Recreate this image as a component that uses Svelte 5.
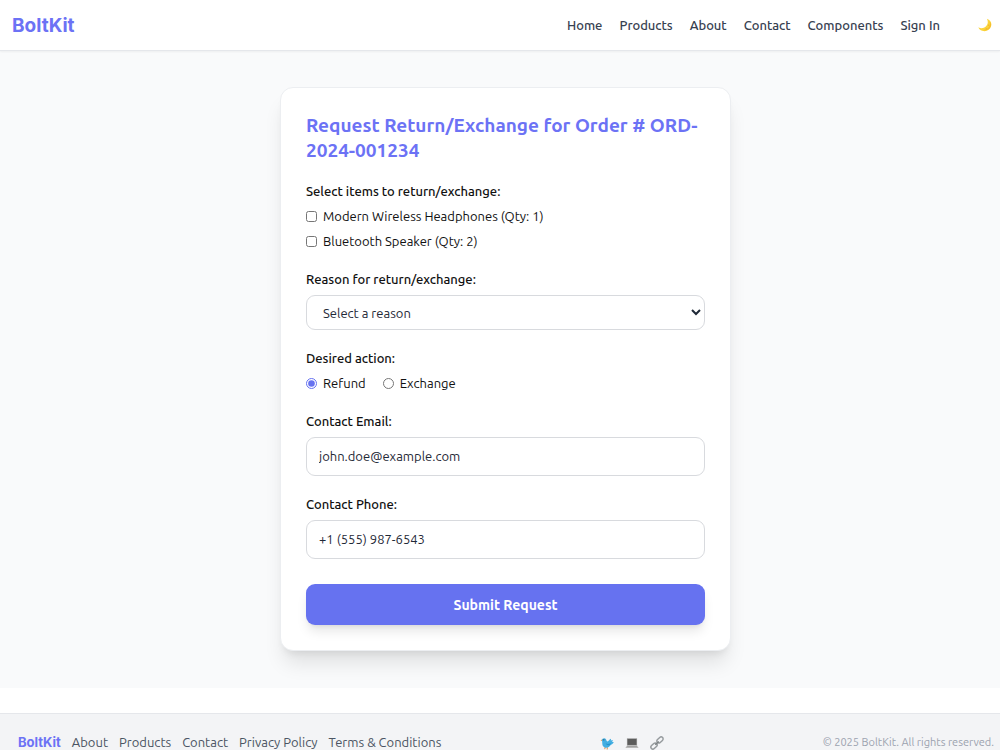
<script>
  const navLinks = ['Home', 'Products', 'About', 'Contact', 'Components', 'Sign In'];
  const footerLinks = ['About', 'Products', 'Contact', 'Privacy Policy', 'Terms & Conditions'];

  const order = {
    id: 'ORD-2024-001234',
    items: [
      { id: 1, name: 'Modern Wireless Headphones', quantity: 1 },
      { id: 2, name: 'Bluetooth Speaker', quantity: 2 }
    ]
  };

  const reasons = ['Defective item', 'Wrong item received', 'No longer needed', 'Other'];

  let selectedItems = $state([]);
  let reason = $state('');
  let action = $state('refund');
  let email = $state('john.doe@example.com');
  let phone = $state('+1 (555) 987-6543');

  function handleSubmit(event) {
    event.preventDefault();
  }
</script>

<header class="navbar">
  <a class="brand" href="#home">BoltKit</a>
  <nav class="nav-links">
    {#each navLinks as link}
      <a href="#{link}">{link}</a>
    {/each}
  </nav>
  <button class="theme-toggle" type="button" aria-label="Toggle dark mode">
    <svg viewBox="0 0 16 16" width="14" height="14">
      <path d="M10.2 0.8C14 2 16 5.4 15 9.2C13.8 13.8 9.2 16.2 4.8 14.7C2.6 14 1 12.4 0.5 10.6C3 12.2 6.5 12 8.9 9.8C11.4 7.5 11.9 4 10.2 0.8Z" fill="#fbd43c" />
      <path d="M13.2 4.4C14.8 9 11.4 13.5 6.4 13.6C10.6 15 14.4 12 14.8 8.4C15 6.8 14.4 5.4 13.2 4.4Z" fill="#f5bd2d" />
      <circle cx="12.2" cy="8.2" r="0.7" fill="#e9ae2c" />
      <circle cx="9.4" cy="12" r="0.6" fill="#e9ae2c" />
    </svg>
  </button>
</header>

<main>
  <form class="card" onsubmit={handleSubmit}>
    <h1>Request Return/Exchange for Order # {order.id}</h1>

    <fieldset class="field">
      <legend>Select items to return/exchange:</legend>
      <div class="checks">
        {#each order.items as item}
          <label class="option">
            <input type="checkbox" value={item.id} bind:group={selectedItems} />
            {item.name} (Qty: {item.quantity})
          </label>
        {/each}
      </div>
    </fieldset>

    <div class="field">
      <label for="reason">Reason for return/exchange:</label>
      <select id="reason" bind:value={reason}>
        <option value="">Select a reason</option>
        {#each reasons as r}
          <option value={r}>{r}</option>
        {/each}
      </select>
    </div>

    <fieldset class="field">
      <legend>Desired action:</legend>
      <div class="radios">
        <label class="option">
          <input type="radio" name="action" value="refund" bind:group={action} />
          Refund
        </label>
        <label class="option">
          <input type="radio" name="action" value="exchange" bind:group={action} />
          Exchange
        </label>
      </div>
    </fieldset>

    <div class="field">
      <label for="email">Contact Email:</label>
      <input class="text-input" id="email" type="email" bind:value={email} />
    </div>

    <div class="field">
      <label for="phone">Contact Phone:</label>
      <input class="text-input" id="phone" type="tel" bind:value={phone} />
    </div>

    <button class="submit-btn" type="submit">Submit Request</button>
  </form>
</main>

<footer>
  <nav class="footer-links">
    <a class="footer-brand" href="#home">BoltKit</a>
    {#each footerLinks as link}
      <a href="#{link}">{link}</a>
    {/each}
  </nav>
  <div class="social">
    <a href="#twitter" aria-label="Twitter">
      <svg viewBox="0 0 16 16" width="14" height="14">
        <path d="M6 12.5L5.4 15M8.4 12.8L8.2 15.4" stroke="#e58b3c" stroke-width="1.1" />
        <path d="M0.6 5.2L2.6 3.6L3 5.6Z" fill="#e58b3c" />
        <path d="M2.2 4.6C2.4 2.4 5.6 1.6 6.8 3.6C7.4 4.8 7.6 6 8.6 6.4C10 5.8 10.6 3.8 12.6 3.2L12.4 5L14.8 4.6L13.8 6.6L15.8 7.2C14.6 8.8 13.6 9.6 12.2 10.4C10.6 13.4 6.4 14.4 3.8 12C2 10.2 3 7.4 2.2 4.6Z" fill="#42aee2" />
        <path d="M6.4 8.4C8.4 9.6 10.6 9.4 12.6 8C11.4 11 8 11.8 6.4 8.4Z" fill="#2792ca" />
        <circle cx="4.4" cy="4.4" r="0.6" fill="#263238" />
      </svg>
    </a>
    <a href="#github" aria-label="GitHub">
      <svg viewBox="0 0 16 16" width="14" height="14">
        <path d="M2.2 2.6H13.8V11H2.2Z" fill="#9a9a9a" />
        <path d="M3 3.4H13V10.2H3Z" fill="#5c5c5c" />
        <path d="M2 11H14L15.6 13.6H0.4Z" fill="#b8b8b8" />
        <path d="M2.6 11.5H13.4L13.8 12.4H2.2Z" fill="#999" />
      </svg>
    </a>
    <a href="#link" aria-label="Website">
      <svg viewBox="0 0 16 16" width="14" height="14" fill="none" stroke="#969b9e" stroke-width="1.7">
        <rect x="0.6" y="9.2" width="8" height="4.6" rx="2.3" transform="rotate(-42 4.6 11.5)" />
        <rect x="7.4" y="2.2" width="8" height="4.6" rx="2.3" transform="rotate(-42 11.4 4.5)" />
        <path d="M6 10L10 6.2" stroke="#7d8285" />
      </svg>
    </a>
  </div>
  <p class="copyright">© 2025 BoltKit. All rights reserved.</p>
</footer>

<style>
  :global(body) {
    background: #fff;
    color: #111;
    font-family: Ubuntu, 'Noto Sans', sans-serif;
    font-size: 13px;
    line-height: 19px;
  }

  a {
    color: inherit;
    text-decoration: none;
  }

  .navbar {
    position: relative;
    display: flex;
    align-items: center;
    height: 50px;
    padding: 0 8px 0 12px;
    background: #fff;
    border-bottom: 1px solid #e5e7eb;
    box-shadow: 0 1px 2px rgba(0, 0, 0, 0.05);
  }

  .brand {
    font-family: Inter, sans-serif;
    font-size: 19px;
    font-weight: 700;
    color: #6c72f5;
  }

  .nav-links {
    display: flex;
    gap: 17px;
    margin-left: auto;
    font-weight: 500;
    color: #374151;
  }

  .theme-toggle {
    display: flex;
    margin-left: 38px;
    padding: 0;
    border: none;
    background: none;
    cursor: pointer;
  }

  main {
    display: flex;
    justify-content: center;
    padding: 36px 6px 37px 17px;
    background: #f9fafb;
  }

  .card {
    box-sizing: border-box;
    width: 100%;
    max-width: 451px;
    padding: 25px;
    background: #fff;
    border: 1px solid #eceef1;
    border-radius: 13px;
    box-shadow: 0 16px 20px -4px rgba(0, 0, 0, 0.1), 0 6px 8px -5px rgba(0, 0, 0, 0.1);
  }

  h1 {
    margin: 0 0 19px;
    font-size: 19px;
    line-height: 25px;
    font-weight: 700;
    color: #6c72f5;
  }

  .field {
    display: flex;
    flex-direction: column;
    gap: 6px;
    min-width: 0;
    margin: 0 0 19px;
    padding: 0;
    border: none;
  }

  .field > label,
  legend {
    padding: 0;
    font-weight: 500;
  }

  .checks {
    display: flex;
    flex-direction: column;
    gap: 6px;
    margin-top: 6px;
  }

  .radios {
    display: flex;
    gap: 17px;
    margin-top: 6px;
  }

  .option {
    display: flex;
    align-items: center;
    gap: 6px;
  }

  .option input {
    width: 11px;
    height: 11px;
    margin: 0;
    accent-color: #6672f0;
  }

  select,
  .text-input {
    box-sizing: border-box;
    width: 100%;
    border: 1px solid #d8dade;
    border-radius: 9px;
    background: #fff;
    color: #1f2937;
    font: inherit;
  }

  select {
    height: 35px;
    padding: 0 0 0 12px;
  }

  .text-input {
    height: 39px;
    padding: 0 12px 1px;
  }

  .submit-btn {
    width: 100%;
    height: 41px;
    margin-top: 6px;
    padding: 1px 0 0;
    border: none;
    border-radius: 9px;
    background: #6672f0;
    color: #fff;
    font: inherit;
    font-size: 14px;
    font-weight: 700;
    box-shadow: 0 8px 12px -2px rgba(0, 0, 0, 0.1), 0 3px 5px -3px rgba(0, 0, 0, 0.1);
    cursor: pointer;
  }

  footer {
    display: flex;
    align-items: center;
    justify-content: space-between;
    margin-top: 25px;
    padding: 19px 6px 19px 18px;
    border-top: 1px solid #e5e7eb;
    background: #f3f4f6;
    color: #4b5563;
  }

  .footer-links {
    display: flex;
    gap: 11px;
  }

  .footer-brand {
    font-family: Inter, sans-serif;
    font-weight: 700;
    color: #6c72f5;
  }

  .social {
    display: flex;
    gap: 11px;
  }

  .social a {
    display: flex;
  }

  .copyright {
    margin: 0;
    font-size: 11px;
    color: #9ca3af;
  }
</style>
